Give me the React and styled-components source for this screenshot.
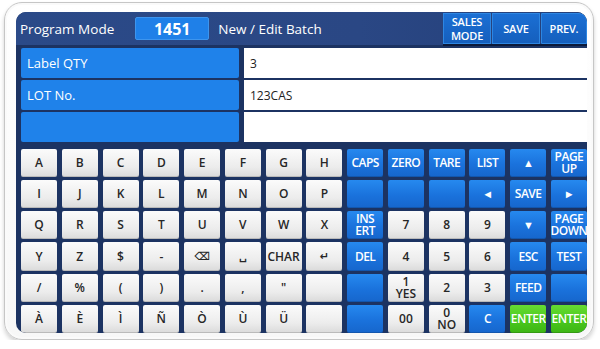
import React from "react";
import styled, { createGlobalStyle } from "styled-components";

const Global = createGlobalStyle`
  html, body {
    margin: 0;
    padding: 0;
    background: #ffffff;
  }
  body {
    font-family: "Open Sans", "DejaVu Sans", sans-serif;
  }
`;

// keyboard data: [label, tone]
const w = (t) => [t, "white"];
const b = (t) => [t, "blue"];
const g = (t) => [t, "green"];

const keyRows = [
  [..."ABCDEFGH"].map(w).concat([b("CAPS"), b("ZERO"), b("TARE"), b("LIST"), b("▲"), b("PAGE\nUP")]),
  [..."IJKLMNOP"].map(w).concat([b(""), b(""), b(""), b("◄"), b("SAVE"), b("►")]),
  [..."QRSTUVWX"].map(w).concat([b("INS\nERT"), w("7"), w("8"), w("9"), b("▼"), b("PAGE\nDOWN")]),
  ["Y", "Z", "$", "-", "⌫", "␣", "CHAR", "↵"].map(w).concat([b("DEL"), w("4"), w("5"), w("6"), b("ESC"), b("TEST")]),
  ["/", "%", "(", ")", ".", ",", "\"", ""].map(w).concat([b(""), w("1\nYES"), w("2"), w("3"), b("FEED"), b("")]),
  ["À", "È", "Ì", "Ñ", "Ò", "Ù", "Ü", ""].map(w).concat([b(""), w("00"), w("0\nNO"), b("C"), g("ENTER"), g("ENTER")]),
];

const fields = [
  { label: "Label QTY", value: "3" },
  { label: "LOT No.", value: "123CAS" },
  { label: "", value: "" },
];

const isArrow = (t) => t !== "" && "▲▼◄►".includes(t);
const isSymbol = (t) => t !== "" && "⌫␣↵".includes(t);

export default function App() {
  return (
    <>
      <Global />
      <Frame>
        <Panel>
          <Header>
            <Title>Program Mode</Title>
            <ModeNo>1451</ModeNo>
            <Title>New / Edit Batch</Title>
            <HeaderButtons>
              <HeadButton>SALES{"\n"}MODE</HeadButton>
              <HeadButton>SAVE</HeadButton>
              <HeadButton>PREV.</HeadButton>
            </HeaderButtons>
          </Header>

          <Fields>
            {fields.map((f, i) => (
              <FieldRow key={i}>
                <FieldLabel>{f.label}</FieldLabel>
                <FieldValue>{f.value}</FieldValue>
              </FieldRow>
            ))}
          </Fields>

          <Keys>
            {keyRows.flat().map(([label, tone], i) => (
              <Key key={i} $tone={tone} $arrow={isArrow(label)} $symbol={isSymbol(label)}>
                {label}
              </Key>
            ))}
          </Keys>
        </Panel>
      </Frame>
    </>
  );
}

const Frame = styled.div`
  box-sizing: border-box;
  width: 590px;
  height: 338px;
  margin: 2px 0 0 4px;
  padding: 9px 6px 6px 11px;
  background: linear-gradient(#ffffff, #f7f7f7);
  border: 1px solid #c6c6c6;
  border-radius: 18px;
  box-shadow: 0 3px 4px rgba(0, 0, 0, 0.18), inset 0 0 0 2px #fafafa;
`;

const Panel = styled.div`
  width: 571px;
  height: 321px;
  background: #1c3362;
  border-radius: 10px;
  overflow: hidden;
  display: flex;
  flex-direction: column;
`;

const Header = styled.div`
  height: 33px;
  flex: none;
  display: flex;
  align-items: center;
  padding-left: 4px;
  background: linear-gradient(90deg, #2b4a88, #2a4784 60%, #243f79);
`;

const Title = styled.span`
  color: #ffffff;
  font-size: 13.5px;
  white-space: nowrap;
`;

const ModeNo = styled.div`
  box-sizing: border-box;
  width: 74px;
  height: 23px;
  margin: 0 9px 0 21px;
  background: #1f80e8;
  border: 1px solid #3d95ee;
  border-radius: 2px;
  color: #ffffff;
  font-size: 16px;
  font-weight: 700;
  display: flex;
  align-items: center;
  justify-content: center;
`;

const HeaderButtons = styled.div`
  margin-left: auto;
  align-self: flex-start;
  display: flex;
  gap: 1px;
  margin-top: 1px;
  box-shadow: 0 2px 0 #0c1a3a;
`;

const HeadButton = styled.div`
  box-sizing: border-box;
  width: 48px;
  height: 31px;
  background: linear-gradient(#1b6fd4, #155fbd);
  border: 1px solid #2d86e2;
  color: #ffffff;
  font-size: 11px;
  font-weight: 600;
  letter-spacing: -0.2px;
  line-height: 14px;
  text-align: center;
  white-space: pre-line;
  display: flex;
  align-items: center;
  justify-content: center;
  &:last-child {
    width: 46px;
    border-top-right-radius: 8px;
  }
`;

const Fields = styled.div`
  margin-top: 3px;
  display: flex;
  flex-direction: column;
  gap: 2px;
`;

const FieldRow = styled.div`
  display: flex;
  gap: 5px;
  height: 30px;
  padding-left: 5px;
`;

const FieldLabel = styled.div`
  width: 218px;
  flex: none;
  background: #1f82ea;
  border-radius: 2px;
  color: #ffffff;
  font-size: 13px;
  display: flex;
  align-items: center;
  padding-left: 6px;
  box-sizing: border-box;
`;

const FieldValue = styled.div`
  flex: 1;
  background: #ffffff;
  color: #222222;
  font-size: 12px;
  display: flex;
  align-items: center;
  padding-left: 6px;
`;

const tones = {
  white: { bg: "linear-gradient(#fbfbfb, #ececec 65%, #dadada)", fg: "#262626" },
  blue: { bg: "linear-gradient(#2689ef, #1a72dc 55%, #1666cc)", fg: "#ffffff" },
  green: { bg: "linear-gradient(#66dc32, #48c61c 60%, #3db515)", fg: "#ffffff" },
};

const Keys = styled.div`
  margin-top: 7px;
  padding-left: 5px;
  flex: 1;
  display: grid;
  grid-template-columns: repeat(14, 1fr);
  grid-template-rows: repeat(6, 1fr);
  column-gap: 4.7px;
  row-gap: 3px;
`;

const Key = styled.div`
  background: ${(p) => tones[p.$tone].bg};
  color: ${(p) => tones[p.$tone].fg};
  border-radius: 2px;
  box-shadow: inset 0 -1px 0 rgba(0, 0, 0, 0.15);
  display: flex;
  align-items: center;
  justify-content: center;
  text-align: center;
  white-space: pre-line;
  line-height: 12px;
  font-family: ${(p) => (p.$symbol ? '"DejaVu Sans", sans-serif' : '"Open Sans", sans-serif')};
  font-size: ${(p) => (p.$arrow ? "11px" : p.$symbol ? "11px" : "12px")};
  font-weight: 600;
  letter-spacing: ${(p) => (p.$tone === "white" ? "0" : "-0.5px")};
  overflow: hidden;
`;
